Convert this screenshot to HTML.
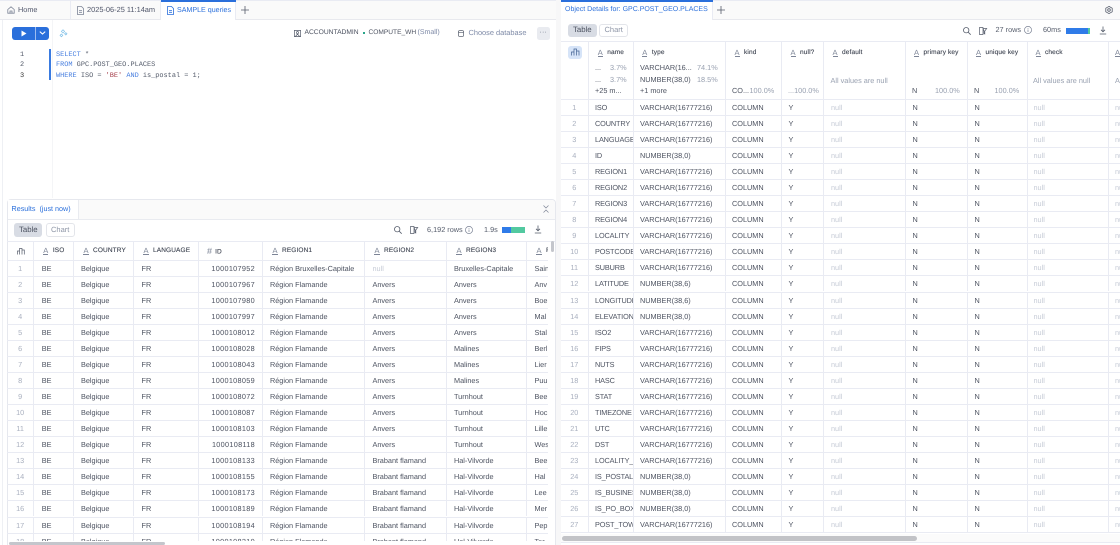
<!DOCTYPE html>
<html lang="en">
<head>
<meta charset="utf-8">
<title>Snowflake worksheet</title>
<style>
html,body{margin:0;padding:0;width:1120px;height:545px;overflow:hidden;background:#fff}
#w{position:relative;width:1120px;height:545px;overflow:hidden;font-family:"Liberation Sans",sans-serif;font-size:7.3px;color:#4c5260;text-rendering:geometricPrecision;filter:blur(.3px);background:#fff}
.a{position:absolute;white-space:nowrap}
.bx{position:absolute}
svg{position:absolute;overflow:visible;fill:none}
.t{line-height:10px}
.grid{position:absolute;overflow:hidden}
.r{display:flex;height:16.07px;box-sizing:border-box;border-bottom:1px solid #e9ebf3;line-height:15px}
.r>*{display:block;box-sizing:border-box;flex:none;height:15px;overflow:hidden;white-space:nowrap;border-right:1px solid #e9ebf3;font-style:normal}
.r>i{text-align:center;color:#a9b0bf;padding:0}
.n{color:#c6cbd6}
.h{height:19.5px;line-height:20px;font-size:6.5px;color:#3f4552;letter-spacing:.02em;-webkit-text-stroke:.12px #3f4552}
.h>*{height:19px}
u{display:inline-block;text-decoration:none;border-bottom:.8px solid #7c8496;color:#7c8496;line-height:7px;height:7px;font-size:7.5px;margin-right:4.4px;vertical-align:-.5px;font-weight:400;-webkit-text-stroke:0}
#L .r>:nth-child(1){width:27.3px}
#L .r>:nth-child(2){width:40.2px;padding-left:7.5px}
#L .r>:nth-child(3){width:60px;padding-left:6.5px}
#L .r>:nth-child(4){width:64.5px;padding-left:7px}
#L .r>:nth-child(5){width:64.5px;padding-right:7.5px;text-align:right;letter-spacing:.3px}
#L .r>:nth-child(6){width:102px;padding-left:6.5px}
#L .r>:nth-child(7){width:82px;padding-left:7px}
#L .r>:nth-child(8){width:80px;padding-left:6.5px}
#L .r>:nth-child(9){width:30px;padding-left:7px;border:0}
#L .h>:nth-child(5){text-align:left;padding-left:8px;padding-right:0;letter-spacing:.02em}
#L .h>:nth-child(n+2){padding-left:9px}
#L .h>:nth-child(5){padding-left:8px}
#R .r>:nth-child(1){width:27.5px}
#R .r>:nth-child(2){width:45px;padding-left:6.5px;letter-spacing:-.12px}
#R .r>:nth-child(3){width:92px;padding-left:6.5px}
#R .r>:nth-child(4){width:56px;padding-left:6.5px}
#R .r>:nth-child(5){width:42px;padding-left:7px}
#R .r>:nth-child(6){width:82px;padding-left:7.5px}
#R .r>:nth-child(7){width:62px;padding-left:7px}
#R .r>:nth-child(8){width:60px;padding-left:7px}
#R .r>:nth-child(9){width:81px;padding-left:6px}
#R .r>:nth-child(10){width:14px;padding-left:6.5px;border:0}
.lbl{position:absolute;font-size:6.5px;line-height:10px;color:#3f4552;white-space:nowrap;letter-spacing:.02em;-webkit-text-stroke:.12px #3f4552}
.s{position:absolute;line-height:10px;white-space:nowrap}
.g{color:#98a0b0}
</style>
</head>
<body>
<div id="w">

<!-- left top tab bar -->
<div class="bx" style="left:0;top:0;width:561px;height:19px;background:#fafafa;border-bottom:1px solid #e8e9ee"></div>
<div class="bx" style="left:0;top:0;width:561px;height:1px;background:#e9ebf3"></div>
<div class="bx" style="left:70px;top:1px;width:1px;height:18px;background:#e9ebf3"></div>
<div class="bx" style="left:160px;top:1px;width:1px;height:18px;background:#e9ebf3"></div>
<div class="bx" style="left:161px;top:0;width:75px;height:20px;background:#fff;border-right:1px solid #e9ebf3;box-sizing:border-box"></div>
<div class="bx" style="left:161px;top:0;width:75px;height:2px;background:#2a6fdb"></div>
<svg style="left:7px;top:6px" width="8" height="8" viewBox="0 0 8 8" stroke="#7c8496" stroke-width=".8"><path d="M.8 3.5 4 .8l3.2 2.7V7.2H.8zM3 7.2V5h2v2.2"/></svg>
<div class="a t" style="left:18px;top:5px;color:#50566a">Home</div>
<svg style="left:77px;top:6px" width="7" height="9" viewBox="0 0 7 9" stroke="#7c8496" stroke-width=".8"><path d="M.5.5H4.5L6.5 2.5V8.5H.5zM2 4.5H5M2 6.3H5"/></svg>
<div class="a t" style="left:87px;top:5px;color:#50566a;font-size:7.4px">2025-06-25 11:14am</div>
<svg style="left:167px;top:6px" width="7" height="9" viewBox="0 0 7 9" stroke="#2a6fdb" stroke-width=".8"><path d="M.5.5H4.5L6.5 2.5V8.5H.5zM2 4.5H5M2 6.3H5"/></svg>
<div class="a t" style="left:177px;top:5px;color:#2a6fdb;font-size:7.1px">SAMPLE queries</div>
<svg style="left:241px;top:6px" width="8" height="8" viewBox="0 0 8 8" stroke="#555c6b" stroke-width=".8"><path d="M4 0V8M0 4H8"/></svg>

<!-- run button -->
<div class="bx" style="left:12px;top:26.5px;width:37px;height:13.5px;border-radius:3px;background:#2a6fdb"></div>
<div class="bx" style="left:35px;top:27px;width:1px;height:12.5px;background:#9dbcf0"></div>
<svg style="left:21px;top:30px" width="6" height="7" viewBox="0 0 6 7"><path d="M.5.5 5.5 3.5.5 6.5z" fill="#fff"/></svg>
<svg style="left:39px;top:31px" width="7" height="4" viewBox="0 0 7 4" stroke="#fff" stroke-width="1.1"><path d="M.8.6 3.5 3 6.2.6"/></svg>
<svg style="left:59px;top:29px" width="9" height="9" viewBox="0 0 9 9" stroke="#7fc0e8" stroke-width=".7"><path d="M4 .8 5.6 2.4 4 4 2.4 2.4zM6.8 3.6 8 4.8 6.8 6 5.6 4.8zM2.4 5 3.8 6.4 2.4 7.8 1 6.4z"/></svg>

<!-- context -->
<svg style="left:294px;top:29.5px" width="7" height="7" viewBox="0 0 7 7" stroke="#555c6b" stroke-width=".7"><path d="M.4.4H6.6V6.6H.4zM1.5 6.4 3.5 4 5.5 6.4M3.5 1.5a1.1 1.1 0 1 0 .01 0"/></svg>
<div class="a t" style="left:304.5px;top:28px;font-size:6.7px;color:#4c5260">ACCOUNTADMIN</div>
<div class="bx" style="left:363px;top:32px;width:2px;height:2px;background:#2aa58a"></div>
<div class="a t" style="left:368.5px;top:28px;font-size:6.6px;color:#4c5260">COMPUTE_WH</div>
<div class="a t" style="left:417.5px;top:28px;font-size:7px;color:#7d89a6">(Small)</div>
<svg style="left:458px;top:30px" width="6" height="7" viewBox="0 0 6 7" stroke="#555c6b" stroke-width=".7"><path d="M.4 1.4C.4.2 5.6.2 5.6 1.4V5.6C5.6 6.8.4 6.8.4 5.6zM.4 1.6C.4 2.7 5.6 2.7 5.6 1.6"/></svg>
<div class="a t" style="left:468.5px;top:28px;font-size:7.4px;color:#7d89a6">Choose database</div>
<div class="bx" style="left:536.5px;top:26.5px;width:13.5px;height:13.5px;border-radius:2.5px;background:#e9ebf0"></div>
<div class="a t" style="left:539.5px;top:27.5px;font-size:7px;color:#6a7284;letter-spacing:.2px">···</div>

<!-- editor -->
<div class="bx" style="left:49px;top:49px;width:2px;height:31px;background:#3a7be0"></div>
<div class="bx" style="left:51.5px;top:20px;width:1px;height:178px;background:#f4f5f7"></div>
<div class="bx" style="left:2px;top:20px;width:1px;height:525px;background:#eef0f4"></div>
<div style="position:absolute;left:0;top:49.8px;font-family:'Liberation Mono',monospace;font-size:6.9px;line-height:10.4px;color:#555c6b">
<div class="a" style="left:20px;top:0;color:#555c6b">1</div>
<div class="a" style="left:20px;top:10.4px;color:#555c6b">2</div>
<div class="a" style="left:20px;top:20.8px;color:#333">3</div>
<div class="a" style="left:56px;top:0"><span style="color:#4a80e0">SELECT</span> *</div>
<div class="a" style="left:56px;top:10.4px"><span style="color:#4a80e0">FROM</span> GPC.POST_GEO.PLACES</div>
<div class="a" style="left:56px;top:20.8px"><span style="color:#4a80e0">WHERE</span> ISO = <span style="color:#a8434f">'BE'</span> <span style="color:#4a80e0">AND</span> is_postal = 1;</div>
</div>

<!-- Results panel -->
<div class="bx" style="left:6.5px;top:199px;width:549.5px;height:346px;border:1px solid #e6e8ee;border-bottom:0;border-radius:4px 4px 0 0;box-sizing:border-box"></div>
<div class="bx" style="left:7.5px;top:200px;width:547.5px;height:18.5px;background:#fafafa;border-bottom:1px solid #e9ebf0;border-radius:3px 3px 0 0"></div>
<div class="bx" style="left:7.5px;top:200px;width:70px;height:19px;background:#fff;border-right:1px solid #e9ebf0"></div>
<div class="a t" style="left:11.5px;top:203.5px;color:#2a6fdb;font-size:7.2px">Results &nbsp;(just now)</div>
<svg style="left:543px;top:205px" width="6" height="8" viewBox="0 0 6 8" stroke="#7c8496" stroke-width=".7"><path d="M.5.5 3 3 5.5.5M.5 7.5 3 5 5.5 7.5"/></svg>

<div class="bx" style="left:14px;top:223px;width:28px;height:13.5px;border-radius:3px;background:#d8dce4"></div>
<div class="a t" style="left:19px;top:224.5px;color:#4c5260;font-size:7.8px">Table</div>
<div class="bx" style="left:45.5px;top:223px;width:29px;height:13.5px;border-radius:3px;border:1px solid #e3e5ea;box-sizing:border-box"></div>
<div class="a t" style="left:51px;top:224.5px;color:#8d95a6;font-size:7.5px">Chart</div>
<svg style="left:393.5px;top:226px" width="8" height="8" viewBox="0 0 8 8" stroke="#555c6b" stroke-width=".8"><circle cx="3.2" cy="3.2" r="2.7"/><path d="M5.2 5.2 7.7 7.7"/></svg>
<svg style="left:409.5px;top:226px" width="8" height="8" viewBox="0 0 8 8" stroke="#555c6b" stroke-width=".7"><path d="M.5.5H4V7.5H.5zM4 1.500H7.700L5.800 4V7L5 6.500V4z"/></svg>
<div class="a t" style="left:427px;top:224.5px;color:#555c6b;font-size:7.3px">6,192 rows</div>
<svg style="left:465px;top:225.5px" width="8" height="8" viewBox="0 0 8 8" stroke="#7c8496" stroke-width=".7"><circle cx="4" cy="4" r="3.6"/><path d="M4 3.5V6M4 2V2.8"/></svg>
<div class="a t" style="left:484px;top:224.5px;color:#555c6b;font-size:7.3px">1.9s</div>
<div class="bx" style="left:501.5px;top:226.5px;width:9px;height:6px;background:#2f7be8"></div>
<div class="bx" style="left:510.5px;top:226.5px;width:14.5px;height:6px;background:#52c9a0"></div>
<svg style="left:534px;top:225px" width="8" height="9" viewBox="0 0 8 9" stroke="#555c6b" stroke-width=".8"><path d="M4 .5V5.5M2 3.8 4 5.8 6 3.8M.8 8H7.200"/></svg>

<!-- left grid -->
<div class="bx" style="left:7px;top:240.5px;width:548px;height:1px;background:#e9ebf3"></div>
<div id="L" class="grid" style="left:7px;top:241px;width:540.5px;height:300px">
<div class="r h"><i></i><span><u>A</u>ISO</span><span><u>A</u>COUNTRY</span><span><u>A</u>LANGUAGE</span><span><b style="font-weight:400;color:#7c8496;font-size:9px;margin-right:3px;vertical-align:-.5px;-webkit-text-stroke:0">#</b>ID</span><span><u>A</u>REGION1</span><span><u>A</u>REGION2</span><span><u>A</u>REGION3</span><span><u>A</u>R</span></div>
<div class="r"><i>1</i><span>BE</span><span>Belgique</span><span>FR</span><span>1000107952</span><span>Région Bruxelles-Capitale</span><span class="n">null</span><span>Bruxelles-Capitale</span><span>Sain</span></div>
<div class="r"><i>2</i><span>BE</span><span>Belgique</span><span>FR</span><span>1000107967</span><span>Région Flamande</span><span>Anvers</span><span>Anvers</span><span>Anv</span></div>
<div class="r"><i>3</i><span>BE</span><span>Belgique</span><span>FR</span><span>1000107980</span><span>Région Flamande</span><span>Anvers</span><span>Anvers</span><span>Boe</span></div>
<div class="r"><i>4</i><span>BE</span><span>Belgique</span><span>FR</span><span>1000107997</span><span>Région Flamande</span><span>Anvers</span><span>Anvers</span><span>Mal</span></div>
<div class="r"><i>5</i><span>BE</span><span>Belgique</span><span>FR</span><span>1000108012</span><span>Région Flamande</span><span>Anvers</span><span>Anvers</span><span>Stal</span></div>
<div class="r"><i>6</i><span>BE</span><span>Belgique</span><span>FR</span><span>1000108028</span><span>Région Flamande</span><span>Anvers</span><span>Malines</span><span>Berl</span></div>
<div class="r"><i>7</i><span>BE</span><span>Belgique</span><span>FR</span><span>1000108043</span><span>Région Flamande</span><span>Anvers</span><span>Malines</span><span>Lier</span></div>
<div class="r"><i>8</i><span>BE</span><span>Belgique</span><span>FR</span><span>1000108059</span><span>Région Flamande</span><span>Anvers</span><span>Malines</span><span>Puu</span></div>
<div class="r"><i>9</i><span>BE</span><span>Belgique</span><span>FR</span><span>1000108072</span><span>Région Flamande</span><span>Anvers</span><span>Turnhout</span><span>Bee</span></div>
<div class="r"><i>10</i><span>BE</span><span>Belgique</span><span>FR</span><span>1000108087</span><span>Région Flamande</span><span>Anvers</span><span>Turnhout</span><span>Hoc</span></div>
<div class="r"><i>11</i><span>BE</span><span>Belgique</span><span>FR</span><span>1000108103</span><span>Région Flamande</span><span>Anvers</span><span>Turnhout</span><span>Lille</span></div>
<div class="r"><i>12</i><span>BE</span><span>Belgique</span><span>FR</span><span>1000108118</span><span>Région Flamande</span><span>Anvers</span><span>Turnhout</span><span>Wes</span></div>
<div class="r"><i>13</i><span>BE</span><span>Belgique</span><span>FR</span><span>1000108133</span><span>Région Flamande</span><span>Brabant flamand</span><span>Hal-Vilvorde</span><span>Bee</span></div>
<div class="r"><i>14</i><span>BE</span><span>Belgique</span><span>FR</span><span>1000108155</span><span>Région Flamande</span><span>Brabant flamand</span><span>Hal-Vilvorde</span><span>Hal</span></div>
<div class="r"><i>15</i><span>BE</span><span>Belgique</span><span>FR</span><span>1000108173</span><span>Région Flamande</span><span>Brabant flamand</span><span>Hal-Vilvorde</span><span>Lee</span></div>
<div class="r"><i>16</i><span>BE</span><span>Belgique</span><span>FR</span><span>1000108189</span><span>Région Flamande</span><span>Brabant flamand</span><span>Hal-Vilvorde</span><span>Mer</span></div>
<div class="r"><i>17</i><span>BE</span><span>Belgique</span><span>FR</span><span>1000108194</span><span>Région Flamande</span><span>Brabant flamand</span><span>Hal-Vilvorde</span><span>Pep</span></div>
<div class="r"><i>18</i><span>BE</span><span>Belgique</span><span>FR</span><span>1000108210</span><span>Région Flamande</span><span>Brabant flamand</span><span>Hal-Vilvorde</span><span>Ter</span></div>
</div>
<svg style="left:16.5px;top:247px" width="8" height="8" viewBox="0 0 8 8" stroke="#555c6b" stroke-width=".7"><path d="M.5 7.5V4H2.500V7.500M2.500 7.500V1.500H5V7.500M5 7.500V3H7.300V7.500"/></svg>
<div class="bx" style="left:550.5px;top:241px;width:3px;height:11px;border-radius:2px;background:#c4c6cc"></div>
<div class="bx" style="left:9px;top:541.5px;width:156px;height:3px;border-radius:2px;background:#c4c6cc"></div>

<!-- divider -->
<div class="bx" style="left:556px;top:0;width:5px;height:545px;background:#f7f7f8"></div>

<!-- right tab bar -->
<div class="bx" style="left:561px;top:0;width:559px;height:19px;background:#fafafa;border-bottom:1px solid #e8e9ee"></div>
<div class="bx" style="left:561px;top:0;width:559px;height:1px;background:#e9ebf3"></div>
<div class="bx" style="left:561px;top:0;width:151.5px;height:20px;background:#fff;border-right:1px solid #e9ebf3;box-sizing:border-box"></div>
<div class="bx" style="left:561px;top:0;width:151.5px;height:2px;background:#2a6fdb"></div>
<div class="a t" style="left:565px;top:5px;color:#2a6fdb;font-size:7px">Object Details for: GPC.POST_GEO.PLACES</div>
<svg style="left:717px;top:6px" width="8" height="8" viewBox="0 0 8 8" stroke="#555c6b" stroke-width=".8"><path d="M4 0V8M0 4H8"/></svg>
<svg style="left:1104.5px;top:6px" width="8" height="8" viewBox="0 0 8 8" stroke="#555c6b" stroke-width=".8"><path d="M4 .4 7.2 2.2V5.8L4 7.6.8 5.8V2.2z"/><circle cx="4" cy="4" r="1.3"/></svg>

<!-- right toolbar -->
<div class="bx" style="left:567.5px;top:23.5px;width:29px;height:13.5px;border-radius:3px;background:#d8dce4"></div>
<div class="a t" style="left:573px;top:25px;color:#4c5260;font-size:7.8px">Table</div>
<div class="bx" style="left:599px;top:23.5px;width:29px;height:13.5px;border-radius:3px;border:1px solid #e3e5ea;box-sizing:border-box"></div>
<div class="a t" style="left:604.5px;top:25px;color:#8d95a6;font-size:7.5px">Chart</div>
<svg style="left:962.5px;top:26.5px" width="8" height="8" viewBox="0 0 8 8" stroke="#555c6b" stroke-width=".8"><circle cx="3.2" cy="3.2" r="2.7"/><path d="M5.2 5.2 7.7 7.7"/></svg>
<svg style="left:978.5px;top:26.5px" width="8" height="8" viewBox="0 0 8 8" stroke="#555c6b" stroke-width=".7"><path d="M.5.5H4V7.5H.5zM4 1.5H7.7L5.8 4V7L5 6.5V4z"/></svg>
<div class="a t" style="left:995.5px;top:25px;color:#555c6b;font-size:7.3px">27 rows</div>
<svg style="left:1024px;top:26px" width="8" height="8" viewBox="0 0 8 8" stroke="#7c8496" stroke-width=".7"><circle cx="4" cy="4" r="3.6"/><path d="M4 3.5V6M4 2V2.8"/></svg>
<div class="a t" style="left:1043px;top:25px;color:#555c6b;font-size:7.3px">60ms</div>
<div class="bx" style="left:1066px;top:27.5px;width:22px;height:6px;background:#2f7be8"></div>
<div class="bx" style="left:1088px;top:27.5px;width:1.5px;height:6px;background:#52c9a0"></div>
<svg style="left:1099px;top:26px" width="8" height="9" viewBox="0 0 8 9" stroke="#555c6b" stroke-width=".8"><path d="M4 .5V5.5M2 3.8 4 5.8 6 3.8M.8 8H7.2"/></svg>

<!-- right grid -->
<div class="bx" style="left:561px;top:41px;width:559px;height:1px;background:#e9ebf3"></div>
<div id="R" class="grid" style="left:561px;top:42px;width:559px;height:492px">
<div class="r" style="height:57.8px"><i style="height:58px"></i><span style="height:58px"></span><span style="height:58px"></span><span style="height:58px"></span><span style="height:58px"></span><span style="height:58px"></span><span style="height:58px"></span><span style="height:58px"></span><span style="height:58px"></span><span style="height:58px"></span></div>
<div class="r"><i>1</i><span>ISO</span><span>VARCHAR(16777216)</span><span>COLUMN</span><span>Y</span><span class="n">null</span><span>N</span><span>N</span><span class="n">null</span><span class="n">null</span></div>
<div class="r"><i>2</i><span>COUNTRY</span><span>VARCHAR(16777216)</span><span>COLUMN</span><span>Y</span><span class="n">null</span><span>N</span><span>N</span><span class="n">null</span><span class="n">null</span></div>
<div class="r"><i>3</i><span>LANGUAGE</span><span>VARCHAR(16777216)</span><span>COLUMN</span><span>Y</span><span class="n">null</span><span>N</span><span>N</span><span class="n">null</span><span class="n">null</span></div>
<div class="r"><i>4</i><span>ID</span><span>NUMBER(38,0)</span><span>COLUMN</span><span>Y</span><span class="n">null</span><span>N</span><span>N</span><span class="n">null</span><span class="n">null</span></div>
<div class="r"><i>5</i><span>REGION1</span><span>VARCHAR(16777216)</span><span>COLUMN</span><span>Y</span><span class="n">null</span><span>N</span><span>N</span><span class="n">null</span><span class="n">null</span></div>
<div class="r"><i>6</i><span>REGION2</span><span>VARCHAR(16777216)</span><span>COLUMN</span><span>Y</span><span class="n">null</span><span>N</span><span>N</span><span class="n">null</span><span class="n">null</span></div>
<div class="r"><i>7</i><span>REGION3</span><span>VARCHAR(16777216)</span><span>COLUMN</span><span>Y</span><span class="n">null</span><span>N</span><span>N</span><span class="n">null</span><span class="n">null</span></div>
<div class="r"><i>8</i><span>REGION4</span><span>VARCHAR(16777216)</span><span>COLUMN</span><span>Y</span><span class="n">null</span><span>N</span><span>N</span><span class="n">null</span><span class="n">null</span></div>
<div class="r"><i>9</i><span>LOCALITY</span><span>VARCHAR(16777216)</span><span>COLUMN</span><span>Y</span><span class="n">null</span><span>N</span><span>N</span><span class="n">null</span><span class="n">null</span></div>
<div class="r"><i>10</i><span>POSTCODE</span><span>VARCHAR(16777216)</span><span>COLUMN</span><span>Y</span><span class="n">null</span><span>N</span><span>N</span><span class="n">null</span><span class="n">null</span></div>
<div class="r"><i>11</i><span>SUBURB</span><span>VARCHAR(16777216)</span><span>COLUMN</span><span>Y</span><span class="n">null</span><span>N</span><span>N</span><span class="n">null</span><span class="n">null</span></div>
<div class="r"><i>12</i><span>LATITUDE</span><span>NUMBER(38,6)</span><span>COLUMN</span><span>Y</span><span class="n">null</span><span>N</span><span>N</span><span class="n">null</span><span class="n">null</span></div>
<div class="r"><i>13</i><span>LONGITUDE</span><span>NUMBER(38,6)</span><span>COLUMN</span><span>Y</span><span class="n">null</span><span>N</span><span>N</span><span class="n">null</span><span class="n">null</span></div>
<div class="r"><i>14</i><span>ELEVATION</span><span>NUMBER(38,0)</span><span>COLUMN</span><span>Y</span><span class="n">null</span><span>N</span><span>N</span><span class="n">null</span><span class="n">null</span></div>
<div class="r"><i>15</i><span>ISO2</span><span>VARCHAR(16777216)</span><span>COLUMN</span><span>Y</span><span class="n">null</span><span>N</span><span>N</span><span class="n">null</span><span class="n">null</span></div>
<div class="r"><i>16</i><span>FIPS</span><span>VARCHAR(16777216)</span><span>COLUMN</span><span>Y</span><span class="n">null</span><span>N</span><span>N</span><span class="n">null</span><span class="n">null</span></div>
<div class="r"><i>17</i><span>NUTS</span><span>VARCHAR(16777216)</span><span>COLUMN</span><span>Y</span><span class="n">null</span><span>N</span><span>N</span><span class="n">null</span><span class="n">null</span></div>
<div class="r"><i>18</i><span>HASC</span><span>VARCHAR(16777216)</span><span>COLUMN</span><span>Y</span><span class="n">null</span><span>N</span><span>N</span><span class="n">null</span><span class="n">null</span></div>
<div class="r"><i>19</i><span>STAT</span><span>VARCHAR(16777216)</span><span>COLUMN</span><span>Y</span><span class="n">null</span><span>N</span><span>N</span><span class="n">null</span><span class="n">null</span></div>
<div class="r"><i>20</i><span>TIMEZONE</span><span>VARCHAR(16777216)</span><span>COLUMN</span><span>Y</span><span class="n">null</span><span>N</span><span>N</span><span class="n">null</span><span class="n">null</span></div>
<div class="r"><i>21</i><span>UTC</span><span>VARCHAR(16777216)</span><span>COLUMN</span><span>Y</span><span class="n">null</span><span>N</span><span>N</span><span class="n">null</span><span class="n">null</span></div>
<div class="r"><i>22</i><span>DST</span><span>VARCHAR(16777216)</span><span>COLUMN</span><span>Y</span><span class="n">null</span><span>N</span><span>N</span><span class="n">null</span><span class="n">null</span></div>
<div class="r"><i>23</i><span>LOCALITY_TYPE</span><span>VARCHAR(16777216)</span><span>COLUMN</span><span>Y</span><span class="n">null</span><span>N</span><span>N</span><span class="n">null</span><span class="n">null</span></div>
<div class="r"><i>24</i><span>IS_POSTAL</span><span>NUMBER(38,0)</span><span>COLUMN</span><span>Y</span><span class="n">null</span><span>N</span><span>N</span><span class="n">null</span><span class="n">null</span></div>
<div class="r"><i>25</i><span>IS_BUSINESS</span><span>NUMBER(38,0)</span><span>COLUMN</span><span>Y</span><span class="n">null</span><span>N</span><span>N</span><span class="n">null</span><span class="n">null</span></div>
<div class="r"><i>26</i><span>IS_PO_BOX</span><span>NUMBER(38,0)</span><span>COLUMN</span><span>Y</span><span class="n">null</span><span>N</span><span>N</span><span class="n">null</span><span class="n">null</span></div>
<div class="r"><i>27</i><span>POST_TOWN</span><span>VARCHAR(16777216)</span><span>COLUMN</span><span>Y</span><span class="n">null</span><span>N</span><span>N</span><span class="n">null</span><span class="n">null</span></div>
</div>

<!-- right header content -->
<div class="bx" style="left:568px;top:45.5px;width:13.5px;height:13.5px;border-radius:3px;background:#d6e4f8"></div>
<svg style="left:570.5px;top:48px" width="9" height="8" viewBox="0 0 9 8" stroke="#3f5f90" stroke-width=".7"><path d="M.5 7.5V4H3V7.5M3 7.5V1H5.5V7.5M5.5 7.5V3H8V7.5"/></svg>
<div class="lbl" style="left:597.7px;top:48px"><u>A</u>name</div>
<div class="lbl" style="left:642.3px;top:48px"><u>A</u>type</div>
<div class="lbl" style="left:734.5px;top:48px"><u>A</u>kind</div>
<div class="lbl" style="left:790.5px;top:48px"><u>A</u>null?</div>
<div class="lbl" style="left:832.5px;top:48px"><u>A</u>default</div>
<div class="lbl" style="left:914px;top:48px"><u>A</u>primary key</div>
<div class="lbl" style="left:976px;top:48px"><u>A</u>unique key</div>
<div class="lbl" style="left:1035.5px;top:48px"><u>A</u>check</div>
<div class="lbl" style="left:1115px;top:48px"><u>A</u></div>

<div class="s" style="left:595px;top:63px">...</div><div class="s g" style="left:610px;top:63px">3.7%</div>
<div class="s" style="left:595px;top:74.5px">...</div><div class="s g" style="left:610px;top:74.5px">3.7%</div>
<div class="s" style="left:595px;top:86px">+25 m...</div>
<div class="s" style="left:640px;top:63px">VARCHAR(16...</div><div class="s g" style="left:697px;top:63px">74.1%</div>
<div class="s" style="left:640px;top:74.5px">NUMBER(38,0)</div><div class="s g" style="left:697px;top:74.5px">18.5%</div>
<div class="s" style="left:640px;top:86px">+1 more</div>
<div class="s" style="left:732px;top:86px">CO...</div><div class="s g" style="left:749.5px;top:86px">100.0%</div>
<div class="s g" style="left:788px;top:86px">...100.0%</div>
<div class="s g" style="left:830.5px;top:75.5px">All values are null</div>
<div class="s" style="left:912px;top:86px">N</div><div class="s g" style="left:935px;top:86px">100.0%</div>
<div class="s" style="left:974px;top:86px">N</div><div class="s g" style="left:994.5px;top:86px">100.0%</div>
<div class="s g" style="left:1033px;top:75.5px">All values are null</div>
<div class="s g" style="left:1115px;top:75.5px">All</div>

<!-- right bottom scrollbar -->
<div class="bx" style="left:561px;top:534px;width:559px;height:8px;background:#fbfbfb;border-bottom:1px solid #e9ebf3"></div>
<div class="bx" style="left:562px;top:535.5px;width:355px;height:5px;border-radius:3px;background:#c2c3c7"></div>

</div>
</body>
</html>
